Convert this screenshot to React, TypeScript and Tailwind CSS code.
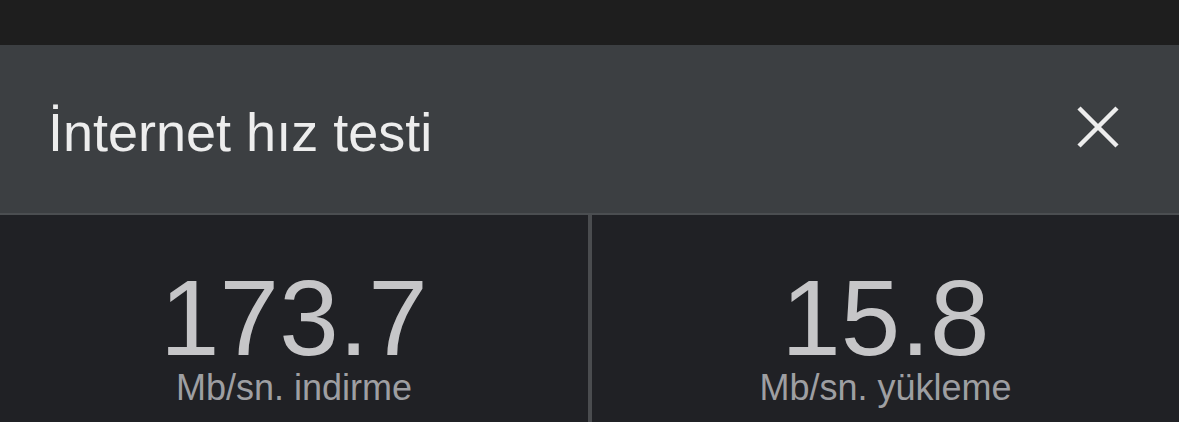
export default function App() {
  return (
    <div
      className="w-[1179px] h-[422px] overflow-hidden bg-[#202125] flex flex-col"
      style={{ fontFamily: '"Liberation Sans", Arial, sans-serif' }}
    >
      <div className="h-[45px] bg-[#1e1e1e]" />
      <div className="h-[170px] bg-[#3c3f42] border-b-2 border-[#4b4e51] flex items-center justify-between pl-[48px] pr-[60px]">
        <span className="mt-[6px] text-[54px] leading-none text-[#ededed]">İnternet hız testi</span>
        <svg className="mb-[4px]" width="42" height="42" viewBox="0 0 42 42">
          <path d="M2 2 L40 40 M40 2 L2 40" stroke="#ededed" strokeWidth="4.5" fill="none" />
        </svg>
      </div>
      <div className="flex-1 flex">
        <div className="w-[588px] flex flex-col items-center pt-[53px]">
          <span className="text-[107px] leading-[100px] text-[#c6c6c8]">173.7</span>
          <span className="mt-[2px] text-[36px] leading-[36px] text-[#9e9fa2]">Mb/sn. indirme</span>
        </div>
        <div className="w-[4px] bg-[#4a4c4f]" />
        <div className="flex-1 flex flex-col items-center pt-[53px]">
          <span className="text-[107px] leading-[100px] text-[#c6c6c8]">15.8</span>
          <span className="mt-[2px] text-[36px] leading-[36px] text-[#9e9fa2]">Mb/sn. yükleme</span>
        </div>
      </div>
    </div>
  );
}
